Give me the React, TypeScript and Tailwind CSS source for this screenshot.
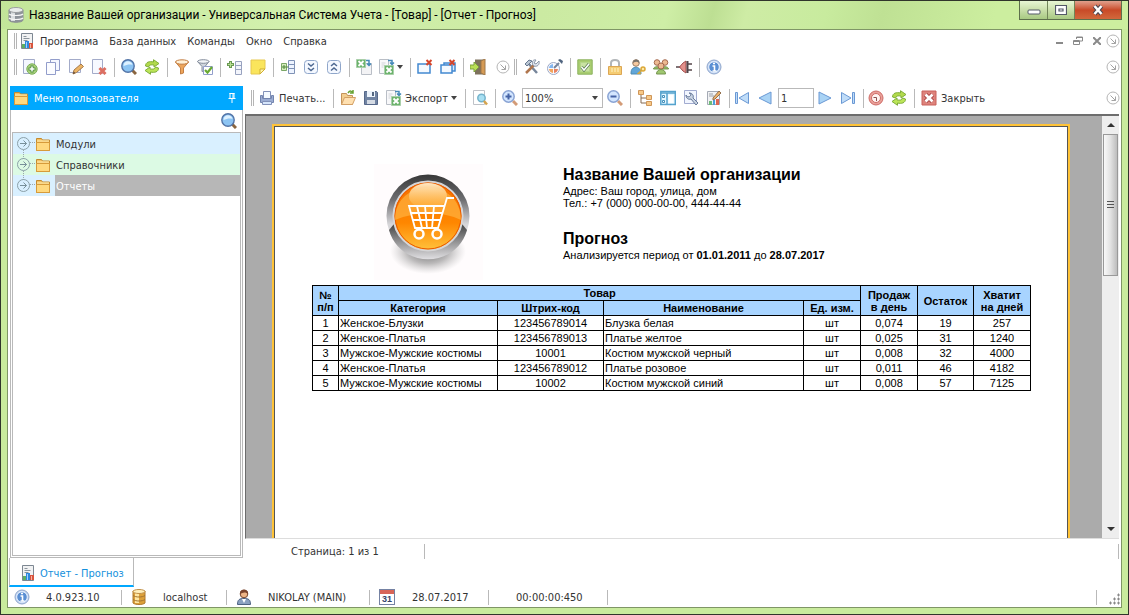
import { useState } from 'react'
import type { ReactNode } from 'react'

// small pieces shared by several icons
const excelX = (
    <>
        <path d="M5.500 6.500h9v9h-9z" fill="#6cb36c" stroke="#a9cfa9" />
        <path d="M7.500 8.500l5 5m0-5l-5 5" stroke="#fff" strokeWidth="1.800" />
    </>
)
const redCross = <path d="M9.500 1l5 5m0-5l-5 5" stroke="#d6452b" strokeWidth="2" />

const icons: Record<string, ReactNode> = {
    report: (
        <>
            <path d="M2.500 .5h11v15h-11z" fill="#f1f2f3" stroke="#7d8792" />
            <path d="M4.500 3.500h3m-3 2h6m-6 2h4" stroke="#8b949c" />
            <path d="M3 11h3v4H3z" fill="#5fae62" />
            <path d="M6 8h4v7H6z" fill="#2d88e0" />
            <path d="M7 9h1v6H7z" fill="#9fd0ff" />
            <path d="M10 10h4v5h-4z" fill="#d9543d" />
            <path d="M11 11h1v4h-1z" fill="#f3b3a3" />
        </>
    ),
    add: (
        <>
            <path d="M1.500 .5h11v14h-11z" fill="#f4f7ff" stroke="#a3abc9" />
            <circle cx="10" cy="10" r="5.200" fill="#a9d27c" stroke="#7cae5c" />
            <path d="M10 6.500v7M6.500 10h7" stroke="#4f8d3f" strokeWidth="3" />
            <path d="M10 7.500v5M7.500 10h5" stroke="#fff" strokeWidth="1.500" />
        </>
    ),
    copy: (
        <>
            <path d="M5.500 .5h9v11h-9z" fill="#f4f7ff" stroke="#929dcb" />
            <path d="M1.500 3.500h9v12h-9z" fill="#fbfcff" stroke="#929dcb" />
        </>
    ),
    edit: (
        <>
            <path d="M1.500 .5h11v13h-11z" fill="#f7f9ff" stroke="#a3abc9" />
            <path d="M5 15l1-4 7-6 2.500 2.500-7 6z" fill="#edb565" stroke="#a57a4c" />
            <path d="M5 15l.7-2.500 1.600 1.600z" fill="#5c4637" />
        </>
    ),
    remove: (
        <>
            <path d="M1.500 .5h10v14h-10z" fill="#f7f9ff" stroke="#a3abc9" />
            <path d="M8.500 9l6 6m0-6l-6 6" stroke="#dc6f62" strokeWidth="3" />
        </>
    ),
    search: (
        <>
            <path d="M11 11l4 4" stroke="#8a653f" strokeWidth="3" />
            <circle cx="7" cy="7" r="6.200" fill="#8cc4f3" stroke="#5273a6" strokeWidth="1.400" />
            <path d="M2.500 7c0-6 8-6 9-1-3-1-6 0-9 1z" fill="#def1ff" />
        </>
    ),
    refresh: (
        <>
            <path d="M1.500 7c0-4 4-5 8-4V.7L15 4.500 10 8V6C7 5.500 5 6 4.500 8z" fill="#b2da4c" stroke="#7fae3a" />
            <path d="M14.500 9c0 4-4 5-8 4v2.300L1 11.500 6 8v2c3 .5 5 0 5.500-2z" fill="#bce558" stroke="#7fae3a" />
        </>
    ),
    filter: (
        <>
            <path d="M1.500 3l5 6v6l3-1V9l5-6z" fill="#eda55b" stroke="#c37e44" />
            <ellipse cx="8" cy="3" rx="6.500" ry="2.200" fill="#fff0d6" stroke="#c37e44" />
        </>
    ),
    filterCheck: (
        <>
            <path d="M.5 2.500l4.500 5v5l3-1v-4l4-5z" fill="#cfd5dd" stroke="#838c9b" />
            <ellipse cx="6.300" cy="2.500" rx="5.700" ry="1.800" fill="#f3f5f8" stroke="#838c9b" />
            <path d="M6.500 7.500h9v8h-9z" fill="#fff" stroke="#929ecb" />
            <path d="M8 11l2.500 2.500L15 8" fill="none" stroke="#69aa31" strokeWidth="2.200" />
        </>
    ),
    addRow: (
        <>
            <path d="M8.500 2.500h6v13h-6zM8.500 6.500h6m-6 4h6" fill="#f3f5fc" stroke="#98a2bf" />
            <path d="M3.500 2v7M0 5.500h7" stroke="#6b9a54" strokeWidth="3" />
            <path d="M3.500 3v5M1 5.500h5" stroke="#b9e095" />
        </>
    ),
    note: (
        <>
            <path d="M1 1h14v9l-5 5H1z" fill="#fae55c" stroke="#e6c84e" />
            <path d="M15 10h-5v5z" fill="#fff6b0" stroke="#d1ae31" />
        </>
    ),
    column: (
        <>
            <path d="M8.500 1.500h6v13h-6zM8.500 5.500h6m-6 4h6" fill="#eef4ff" stroke="#7f92b6" />
            <path d="M1.500 4.500h5v7h-5z" fill="#d4edbd" stroke="#7aa666" />
            <path d="M4 6v4M2 8h4M6.500 8h2" stroke="#4d843b" />
        </>
    ),
    down: (
        <>
            <rect x="1.500" y="1.500" width="13" height="13" rx="3" fill="#f4f8ff" stroke="#8fa6ca" />
            <path d="M5 4.500l3 2.500 3-2.500M5 9l3 2.500L11 9" fill="none" stroke="#4d6891" strokeWidth="1.500" />
        </>
    ),
    up: (
        <>
            <rect x="1.500" y="1.500" width="13" height="13" rx="3" fill="#f4f8ff" stroke="#8fa6ca" />
            <path d="M5 7l3-2.500L11 7m-6 4.500L8 9l3 2.500" fill="none" stroke="#4d6891" strokeWidth="1.500" />
        </>
    ),
    import: (
        <>
            <path d="M5.500 4.500h10v11h-10z" fill="#f3f3f5" stroke="#b9bec6" />
            <path d="M.5 .5h9v8h-9z" fill="#6cb36c" stroke="#a9cfa9" />
            <path d="M2.500 2l5 5m0-5l-5 5" stroke="#fff" strokeWidth="1.800" />
            <path d="M10 1.500h3v4m-2-1l2 2 2-2" fill="none" stroke="#4589b9" strokeWidth="1.500" />
        </>
    ),
    export: (
        <>
            <path d="M.5 .5h9v14h-9z" fill="#f8f8fa" stroke="#b9bec6" />
            <path d="M2.500 4h4m-4 2h3m-3 2h2" stroke="#d0d3d8" />
            {excelX}
            <path d="M9 1.500h4v3m-2-1l2 2 2-2" fill="none" stroke="#4589b9" strokeWidth="1.500" />
        </>
    ),
    closeOne: (
        <>
            <path d="M1 5h12v9H1z" fill="#f4f9ff" stroke="#4389d1" strokeWidth="1.500" />
            {redCross}
        </>
    ),
    closeAll: (
        <>
            <path d="M4 4h11v8H4z" fill="#dcecfc" stroke="#4389d1" strokeWidth="1.500" />
            <path d="M1 6h11v8H1z" fill="#f4f9ff" stroke="#4389d1" strokeWidth="1.500" />
            {redCross}
        </>
    ),
    exit: (
        <>
            <path d="M5 .5h10v15H5z" fill="#7d715d" />
            <path d="M11 2l4-2v16l-4-2z" fill="#d69b55" stroke="#a0784a" />
            <path d="M0 6h4V3l5 5-5 5v-3H0z" fill="#b9de55" stroke="#7da03f" />
        </>
    ),
    more: (
        <>
            <circle cx="8" cy="8" r="6" fill="#fff" stroke="#b5b5b5" />
            <path d="M5.500 5.500l5 5m0-4v4h-4" fill="none" stroke="#a3a3a3" />
        </>
    ),
    tools: (
        <>
            <path d="M4 4l9 10" stroke="#77869b" strokeWidth="2.500" />
            <path d="M1 5l4-4 3 1-5 5z" fill="#b9c5d3" stroke="#67788f" />
            <path d="M2 14l8-8" stroke="#b0764e" strokeWidth="2.500" />
            <path d="M15 2l-3 3-2-1 2-3c-4-1-5 4-2 6 3 1 6-1 5-5z" fill="#e0e5ed" stroke="#8b97a9" />
        </>
    ),
    palette: (
        <>
            <circle cx="6.500" cy="9.500" r="6" fill="#f9f9ff" stroke="#9ba8c4" />
            <path d="M6 5a4.500 4.500 0 0 0-4 4h4z" fill="#83b6ef" />
            <path d="M6 14a4.500 4.500 0 0 1-4-4h4z" fill="#f2a55d" />
            <path d="M7 14a4.500 4.500 0 0 0 4-4H7z" fill="#e88261" />
            <path d="M7 9l5-5" stroke="#73849c" strokeWidth="2" />
            <path d="M11 1l4 4 1-3-3-2z" fill="#50647f" />
        </>
    ),
    check: (
        <>
            <path d="M.8 .8h14.400v14.400H.8z" fill="#a9cd70" stroke="#8cb35f" />
            <path d="M3.500 3.500h9v9h-9z" fill="#c9e2a2" stroke="#b5d68a" />
            <path d="M4.500 8l2.500 3 5-6" fill="none" stroke="#587b50" strokeWidth="3" />
            <path d="M4.500 8l2.500 3 5-6" fill="none" stroke="#fff" strokeWidth="1.500" />
        </>
    ),
    lock: (
        <>
            <path d="M4 7V4c0-4 8-4 8 0v3" fill="none" stroke="#b1b5b8" strokeWidth="2" />
            <path d="M1.500 7.500h13v8h-13z" fill="#f5cc72" stroke="#dca654" />
            <path d="M4 10h8m-8 2h8" stroke="#fff4c6" strokeDasharray="2 1" />
        </>
    ),
    userKey: (
        <>
            <path d="M1 15c0-6 2-6 5-7 4 1 5 3 5 7z" fill="#62a6d8" stroke="#4f8cb3" />
            <circle cx="6" cy="4" r="3.300" fill="#f6c99f" stroke="#9b7f68" />
            <path d="M3 4c0-5 7-4 6 0-2-2-4-1-6 0z" fill="#77716b" />
            <circle cx="13" cy="10" r="2" fill="#ffe8a3" stroke="#dba737" strokeWidth="1.500" />
            <path d="M11.500 11.500L7.500 15m2-1l1 1" stroke="#dba737" strokeWidth="1.500" />
        </>
    ),
    users: (
        <>
            <path d="M.5 10c0-3 7-3 7 0zM8.500 10c0-3 7-3 7 0z" fill="#96bd64" stroke="#75944f" />
            <circle cx="4" cy="3.500" r="2.800" fill="#edb991" stroke="#a5694f" />
            <circle cx="12" cy="3.500" r="2.800" fill="#edb991" stroke="#a5694f" />
            <circle cx="8" cy="7" r="3" fill="#edb991" stroke="#a5694f" />
            <path d="M3.500 15c0-6 9-6 9 0z" fill="#9fc770" stroke="#75944f" />
        </>
    ),
    plug: (
        <>
            <path d="M0 8h5M11 5h5m-5 6h5" stroke="#55464a" strokeWidth="1.500" />
            <path d="M10 2v12L7 12 3.500 8 7 4z" fill="#e3908b" stroke="#a24f4d" />
            <path d="M11.500 2v12" stroke="#514448" strokeWidth="2" />
        </>
    ),
    info: (
        <>
            <circle cx="8" cy="8" r="7" fill="#c3d6f1" stroke="#8fa6cc" />
            <circle cx="8" cy="8" r="5.300" fill="#5a8fd3" stroke="#e9f2ff" />
            <path d="M6.500 7h2v5M6.500 12h4M7 4.500h2" fill="none" stroke="#fff" strokeWidth="1.600" />
        </>
    ),
    print: (
        <>
            <path d="M4.500 1.500h7v7h-7z" fill="#f5fbff" stroke="#8291b8" />
            <path d="M1.500 5.500h2v3h9v-3h2v7h-13z" fill="#9badd3" stroke="#7284ae" />
            <path d="M3.500 11.500h9v3h-9z" fill="#d5e5fb" stroke="#8291b8" />
        </>
    ),
    open: (
        <>
            <path d="M1.500 14.500v-11h5l1 2h5v9z" fill="#f3cf90" stroke="#c4935a" />
            <path d="M1.500 14.500l3-7h11l-3 7z" fill="#ffe0b0" stroke="#d3a066" />
            <path d="M8 3c2-3 4-2 5 0m0-3v3h-3" fill="none" stroke="#67a333" strokeWidth="1.500" />
        </>
    ),
    save: (
        <>
            <path d="M1.500 1.500h12l1 1v12h-13z" fill="#7184a3" stroke="#56688a" />
            <path d="M4 1h8v6H4z" fill="#edf4fc" />
            <path d="M9 2h2v4H9z" fill="#546781" />
            <path d="M4 10h8v4H4z" fill="#d5dbe4" />
        </>
    ),
    preview: (
        <>
            <path d="M1.500 .5h11v14h-11z" fill="#fff" stroke="#bfc2c8" />
            <circle cx="9.500" cy="8" r="3.700" fill="#a8dff2" stroke="#74b3cc" strokeWidth="1.500" />
            <path d="M12 11l3 3.500" stroke="#d5a34d" strokeWidth="2.500" />
        </>
    ),
    zoomIn: (
        <>
            <path d="M11 11l4 4" stroke="#d39b77" strokeWidth="3" />
            <circle cx="6.500" cy="6.500" r="5.700" fill="#d3e6ff" stroke="#8aa4d4" strokeWidth="1.500" />
            <path d="M3.500 6.500h6m-3-3v6" stroke="#4563a6" strokeWidth="2" />
        </>
    ),
    zoomOut: (
        <>
            <path d="M11 11l4 4" stroke="#d39b77" strokeWidth="3" />
            <circle cx="6.500" cy="6.500" r="5.700" fill="#d3e6ff" stroke="#8aa4d4" strokeWidth="1.500" />
            <path d="M3.500 6.500h6" stroke="#4563a6" strokeWidth="2" />
        </>
    ),
    tree: (
        <>
            <path d="M4 4v9h6M4 8h6" fill="none" stroke="#856b53" />
            <path d="M1.500 .5h5v4h-5zM9.500 5.500h5v4h-5zM9.500 11.500h5v4h-5z" fill="#f7c989" stroke="#cf9658" />
        </>
    ),
    thumbs: (
        <>
            <path d="M.8 1.500h14.500v13H.8z" fill="#e5f7ff" stroke="#55a2cd" strokeWidth="1.500" />
            <path d="M1 3h14M7 3v11" stroke="#55a2cd" strokeWidth="1.500" />
            <path d="M2.500 5.500h2v2h-2zM2.500 10.500h2v2h-2z" fill="#fff" stroke="#438fba" />
            <path d="M8.500 5h5v8h-5z" fill="#fff" />
        </>
    ),
    wrench: (
        <>
            <path d="M1.500 .5h12v13h-12z" fill="#f2f6ff" stroke="#a1abd0" />
            <path d="M8 4c0 3-4 4-5 1 0 3 2 5 5 4l5 6 2-2-5-5c1-3-1-5-4-5z" fill="#c8d3e2" stroke="#697b9b" />
        </>
    ),
    chartEdit: (
        <>
            <path d="M1.500 1.500h12v13h-12z" fill="#f1f2f4" stroke="#a5aab5" />
            <path d="M3 4h4M3 6h5" stroke="#999fa8" />
            <path d="M3 11h3v4H3z" fill="#6dbb79" />
            <path d="M7 10h2v5H7z" fill="#4b9fdd" />
            <path d="M10 9h3v6h-3z" fill="#df6551" />
            <path d="M7 8l6-7 2 2-6 6-2 1z" fill="#ecb36b" stroke="#94704e" />
        </>
    ),
    first: <path d="M1.500 2.500h2v11h-2zM14.500 2.500v11L5 8z" fill="#bfdcf8" stroke="#6a98d4" />,
    prev: <path d="M14 2v12L2 8z" fill="#a9d3f5" stroke="#6a98d4" />,
    next: <path d="M2 2v12l12-6z" fill="#a9d3f5" stroke="#6a98d4" />,
    last: <path d="M12.500 2.500h2v11h-2zM1.500 2.500v11L11 8z" fill="#bfdcf8" stroke="#6a98d4" />,
    stop: (
        <>
            <circle cx="8" cy="8" r="7" fill="#e9a19a" stroke="#cf6b66" />
            <circle cx="8" cy="8" r="4.500" fill="#fff5f2" stroke="#cf6b66" />
            <path d="M5.500 7.500h3V11" fill="none" stroke="#8d5150" />
        </>
    ),
    closeReport: (
        <>
            <path d="M1 1h14v14H1z" fill="#dd837c" stroke="#c9605b" />
            <path d="M4.500 4.500l7 7m0-7l-7 7" stroke="#a43b3b" strokeWidth="4.500" />
            <path d="M4.500 4.500l7 7m0-7l-7 7" stroke="#fff" strokeWidth="2.800" />
        </>
    ),
    folder: (
        <>
            <path d="M1.500 14.500v-12h5l1 1.500h7v10.500z" fill="#f3c062" stroke="#c48a2e" />
            <path d="M1.500 6.500h13v8h-13z" fill="#ffd97f" stroke="#d79b3a" />
            <path d="M2 5h12" stroke="#fff0b5" />
        </>
    ),
    pin: <path d="M5.500 3.500h5M6 3v6m3-6v6m1-6v6M4.500 8.500h7M8 9v4" stroke="#fff" fill="none" />,
    server: (
        <>
            <path d="M1 3v10c0 3 14 3 14 0V3z" fill="#8e949a" stroke="#8b9094" />
            <path d="M3 4v10h4V4z" fill="#d9dddf" />
            <ellipse cx="8" cy="3" rx="7" ry="2.500" fill="#e9ecec" stroke="#9b9ea0" />
            <path d="M1 7c2 2 12 2 14 0M1 11c2 2 12 2 14 0" fill="none" stroke="#f5f5f5" strokeWidth="1.200" />
        </>
    ),
    database: (
        <>
            <path d="M2 2v12c2 2 10 2 12 0V2z" fill="#dda039" stroke="#b07a2f" />
            <path d="M4 4v10h4V4z" fill="#ffe6a1" />
            <ellipse cx="8" cy="2.500" rx="6" ry="2" fill="#fff0bc" stroke="#c08f48" />
            <path d="M2 6.500c3 2 9 2 12 0m-12 4c3 2 9 2 12 0" fill="none" stroke="#a37430" />
        </>
    ),
    person: (
        <>
            <path d="M1.500 15.500c0-5 2-6 6.500-6s6.500 1 6.500 6z" fill="#8ba1c0" stroke="#4d6282" />
            <path d="M6 10l2 4 2-4z" fill="#fff" />
            <circle cx="8" cy="5" r="3.800" fill="#eeb586" stroke="#73442c" />
            <path d="M4 5c-1-6 9-6 8 0-2-2-5-2-8 0z" fill="#7c452d" />
        </>
    ),
}

const Icon = ({ name, className = 'h-4 w-4' }: { name: string; className?: string }) => (
    <svg viewBox="0 0 16 16" fill="none" aria-hidden="true" className={`${className} shrink-0`}>
        {icons[name]}
    </svg>
)

const Calendar = () => (
    <div className="h-4 w-4 shrink-0 border border-[#7582a3] bg-white text-center font-['Liberation_Sans',sans-serif] text-[9px] leading-[10px] font-bold text-[#374366]">
        <div className="h-1 bg-[#d86558]" />
        31
    </div>
)

// tree node marker with the dotted guide lines above and below it
const Expander = ({ first, last }: { first: boolean; last: boolean }) => (
    <svg viewBox="0 0 20 21" fill="none" className="h-[21px] w-5" aria-hidden="true">
        {!first && <path d="M8.500 0v5" stroke="#9aa7ad" strokeDasharray="1 1" />}
        {!last && <path d="M8.500 17v4" stroke="#9aa7ad" strokeDasharray="1 1" />}
        <path d="M15 9.500h5" stroke="#9aa7ad" strokeDasharray="1 1" />
        <circle cx="8.500" cy="10.500" r="6" stroke="#8ba0a8" />
        <path d="M5 10.500h6.500M8.500 7.500l3 3-3 3" stroke="#78909a" />
    </svg>
)

const ToolSeparator = () => <div className="-mr-px h-[19px] w-px shrink-0 bg-[#b9b9b9]" />
const StatusSeparator = () => <div className="h-[15px] w-px shrink-0 bg-[#b9b9b9]" />
const Grip = () => <div className="h-4 w-[3px] shrink-0 border-x border-[#b5b5b5]" />
const Arrow = () => (
    <svg viewBox="0 0 6 4" className="h-1 w-[6px] shrink-0" aria-hidden="true">
        <path d="M0 0h6L3 4z" fill="#444" />
    </svg>
)

const Tool = ({ name, label }: { name: string; label: string }) => (
    <button title={label} aria-label={label} className="shrink-0">
        <Icon name={name} />
    </button>
)

const mainTools = [
    ['add', 'Добавить'], ['copy', 'Копировать'], ['edit', 'Изменить'], ['remove', 'Удалить'], ['|'],
    ['search', 'Поиск'], ['refresh', 'Обновить'], ['|'],
    ['filter', 'Фильтр'], ['filterCheck', 'Настройка фильтра'], ['|'],
    ['addRow', 'Добавить строку'], ['note', 'Заметка'], ['|'],
    ['column', 'Столбцы'], ['down', 'Развернуть'], ['up', 'Свернуть'], ['|'],
    ['import', 'Импорт'], ['export', 'Экспорт'], ['v'], ['|'],
    ['closeOne', 'Закрыть окно'], ['closeAll', 'Закрыть все окна'], ['|'],
    ['exit', 'Выход'], ['gap'], ['more', 'Ещё'], ['||'],
    ['tools', 'Настройки'], ['palette', 'Оформление'], ['|'],
    ['check', 'Задачи'], ['|'],
    ['lock', 'Блокировка'], ['userKey', 'Права'], ['users', 'Пользователи'], ['plug', 'Соединение'], ['|'],
    ['info', 'О программе'],
]

const rows = [
    ['Женское-Блузки', '123456789014', 'Блузка белая', '0,074', '19', '257'],
    ['Женское-Платья', '123456789013', 'Платье желтое', '0,025', '31', '1240'],
    ['Мужское-Мужские костюмы', '10001', 'Костюм мужской черный', '0,008', '32', '4000'],
    ['Женское-Платья', '123456789012', 'Платье розовое', '0,011', '46', '4182'],
    ['Мужское-Мужские костюмы', '10002', 'Костюм мужской синий', '0,008', '57', '7125'],
]

const TitleBar = () => (
    <header className="flex h-7 shrink-0 items-start bg-[linear-gradient(105deg,#c2e599_0%,#d2f0ad_25%,#cbeaa2_48%,#ceeea6_59%,#bddf93_63%,#ceeca5_66%,#c8eb9e_73%,#bfe194_78%,#ccee9f_88%)] pr-[6px] pl-[7px]">
        <div className="flex h-7 min-w-0 flex-1 items-center gap-[5px]">
            <Icon name="server" />
            <h1 className="font-['Roboto',sans-serif] text-[12px] whitespace-nowrap text-black">
                Название Вашей организации - Универсальная Система Учета - [Товар] - [Отчет - Прогноз]
            </h1>
        </div>
        <div className="flex h-[19px] shrink-0 border border-t-0 border-[#5d704b]">
            <button aria-label="Свернуть" className="flex w-7 items-center justify-center border-r border-[#718558] bg-linear-to-b from-[#e8f6d3] via-[#c9dfaa] to-[#a8c982]">
                <svg viewBox="0 0 14 8" className="mt-1 h-2 w-[14px]"><rect x="1" y="2" width="12" height="4" rx="1" fill="#fff" stroke="#535866" /></svg>
            </button>
            <button aria-label="Развернуть" className="flex w-[27px] items-center justify-center border-r border-[#718558] bg-linear-to-b from-[#e8f6d3] via-[#c9dfaa] to-[#a8c982]">
                <svg viewBox="0 0 12 11" className="h-[11px] w-3"><path d="M.5 .5h11v9H.5zM4 4h4v2H4z" fill="#fff" stroke="#535866" strokeWidth="1.200" /></svg>
            </button>
            <button aria-label="Закрыть" className="flex w-[46px] items-center justify-center bg-linear-to-b from-[#e0a08c] via-[#c84a27] to-[#d2683c]">
                <svg viewBox="0 0 14 12" className="h-3 w-[14px]"><path d="M3.500 2l7 8m0-8l-7 8" stroke="#4b4650" strokeWidth="4.500" /><path d="M3.500 2l7 8m0-8l-7 8" stroke="#fff" strokeWidth="2.500" /></svg>
            </button>
        </div>
    </header>
)

const MenuBar = () => (
    <nav className="flex h-[22px] shrink-0 items-center pl-[6px]">
        <Grip />
        <Icon name="report" className="mr-[5px] ml-[2px] h-4 w-4" />
        <div className="flex flex-1 gap-[11px] pt-px">
            {['Программа', 'База данных', 'Команды', 'Окно', 'Справка'].map((item) => (
                <button key={item}>{item}</button>
            ))}
        </div>
        <button aria-label="Свернуть документ" className="mr-[9px]"><svg viewBox="0 0 8 10" className="h-[10px] w-2"><path d="M0 7h7" stroke="#8a8a8a" strokeWidth="2" /></svg></button>
        <button aria-label="Восстановить документ" className="mr-[9px]"><svg viewBox="0 0 11 10" className="h-[10px] w-[11px]"><path d="M3.500 3V1h6v4H7M.5 4.500h6v4h-6zM.5 5.500h6M3 1.500h7" fill="none" stroke="#8a8a8a" /></svg></button>
        <button aria-label="Закрыть документ" className="mr-1"><svg viewBox="0 0 8 8" className="h-2 w-2"><path d="M0 0l8 8m0-8L0 8" stroke="#8a8a8a" strokeWidth="2" /></svg></button>
        <Tool name="more" label="Параметры меню" />
    </nav>
)

const MainToolbar = () => (
    <div role="toolbar" className="flex h-[30px] shrink-0 items-center justify-between pl-[6px]">
        <div className="flex items-center gap-[7px]">
            <div className="-mr-[2px]"><Grip /></div>
            {mainTools.map(([name, label], i) => {
                if (name === '|') return <ToolSeparator key={i} />
                if (name === '||') return <div key={i} className="-ml-1"><Grip /></div>
                if (name === 'v') return <div key={i} className="-ml-[5px]"><Arrow /></div>
                if (name === 'gap') return <div key={i} className="-mx-[3px] w-px" />
                return <Tool key={i} name={name} label={label} />
            })}
        </div>
        <Tool name="more" label="Параметры панели" />
    </div>
)

const UserMenu = () => {
    const [selected, setSelected] = useState('Отчеты')
    const items = ['Модули', 'Справочники', 'Отчеты']
    return (
        <aside className="mt-1 flex w-[233px] shrink-0 flex-col border border-t-0 border-[#b9b9b9]">
            <div className="-mx-px flex h-6 shrink-0 items-center bg-[#00a8ff] pr-[3px] pl-[3px] text-white">
                <Icon name="folder" />
                <h2 className="ml-[5px] flex-1 pt-px">Меню пользователя</h2>
                <Tool name="pin" label="Закрепить" />
            </div>
            <div className="flex h-[22px] shrink-0 items-center pr-[5px]">
                <input aria-label="Поиск по меню" className="h-full min-w-0 flex-1 outline-none" />
                <Tool name="search" label="Найти" />
            </div>
            <ul className="mx-px mb-px flex-1 border border-[#b9b9b9]">
                {items.map((item, i) => (
                    <li key={item} className={`flex h-[21px] items-center ${i === 1 ? 'bg-[#dcfae4]' : 'bg-[#d9f0ff]'}`}>
                        <button aria-label={`Раскрыть ${item}`} className="ml-[2px]">
                            <Expander first={i === 0} last={i === items.length - 1} />
                        </button>
                        <Icon name="folder" />
                        <button
                            onClick={() => setSelected(item)}
                            className={`ml-1 h-full flex-1 pt-px pl-px text-left ${selected === item ? 'bg-[#b7b7b7] text-white' : ''}`}
                        >
                            {item}
                        </button>
                    </li>
                ))}
            </ul>
        </aside>
    )
}

const ReportToolbar = () => (
    <div role="toolbar" className="flex h-8 shrink-0 items-center justify-between pl-[6px]">
        <div className="flex items-center gap-[7px]">
            <div className="-mr-[2px]"><Grip /></div>
            <button className="flex w-[67px] items-center gap-1 whitespace-nowrap"><Icon name="print" /><span className="pt-px">Печать...</span></button>
            <ToolSeparator />
            <Tool name="open" label="Открыть" />
            <Tool name="save" label="Сохранить" />
            <button className="flex w-[72px] items-center gap-[3px] whitespace-nowrap">
                <Icon name="export" /><span className="pt-px">Экспорт</span><Arrow />
            </button>
            <ToolSeparator />
            <Tool name="preview" label="Просмотр" />
            <ToolSeparator />
            <Tool name="zoomIn" label="Увеличить" />
            <div className="relative -mx-[3px]">
                <select aria-label="Масштаб" defaultValue="100%" className="h-5 w-[81px] appearance-none border border-[#b9b9b9] bg-white pl-[2px] outline-none">
                    <option>50%</option>
                    <option>100%</option>
                    <option>200%</option>
                </select>
                <span className="pointer-events-none absolute top-2 right-[5px] flex"><Arrow /></span>
            </div>
            <Tool name="zoomOut" label="Уменьшить" />
            <ToolSeparator />
            <Tool name="tree" label="Структура" />
            <Tool name="thumbs" label="Миниатюры" />
            <Tool name="wrench" label="Параметры страницы" />
            <Tool name="chartEdit" label="Редактировать отчет" />
            <div className="-mr-[2px]"><ToolSeparator /></div>
            <Tool name="first" label="Первая страница" />
            <Tool name="prev" label="Предыдущая страница" />
            <input aria-label="Номер страницы" defaultValue="1" className="-mr-1 -ml-[2px] h-5 w-9 border border-[#b9b9b9] pl-[2px] outline-none" />
            <Tool name="next" label="Следующая страница" />
            <Tool name="last" label="Последняя страница" />
            <div className="-mr-[2px]"><ToolSeparator /></div>
            <Tool name="stop" label="Остановить" />
            <Tool name="refresh" label="Обновить отчет" />
            <ToolSeparator />
            <button className="flex items-center gap-1"><Icon name="closeReport" /><span className="pt-px">Закрыть</span></button>
        </div>
        <Tool name="more" label="Параметры отчета" />
    </div>
)

const CartLogo = () => (
    <svg viewBox="0 0 109 116" className="h-[116px] w-[109px] bg-[#fffcfd]" role="img" aria-label="Логотип">
        <defs>
            <linearGradient id="rim" x2="0" y2="1"><stop stopColor="#383838" /><stop offset=".3" stopColor="#6d6d70" /><stop offset=".6" stopColor="#d7d6d9" /></linearGradient>
            <linearGradient id="lower" x2="0" y2="1"><stop stopColor="#444" /><stop offset="1" stopColor="#e0dfe2" /></linearGradient>
            <linearGradient id="orange" x2="0" y2="1"><stop stopColor="#f56f00" /><stop offset=".6" stopColor="#ff8700" /><stop offset="1" stopColor="#ffc33d" /></linearGradient>
            <linearGradient id="gloss" x2="0" y2="1"><stop stopColor="#ffe9c5" /><stop offset="1" stopColor="#ffab2d" stopOpacity=".6" /></linearGradient>
            <radialGradient id="shadow"><stop stopColor="#555" stopOpacity=".9" /><stop offset=".55" stopColor="#777" stopOpacity=".5" /><stop offset="1" stopColor="#aaa" stopOpacity="0" /></radialGradient>
        </defs>
        <ellipse cx="54" cy="87" rx="38" ry="23" fill="url(#shadow)" />
        <circle cx="54" cy="52" r="41.500" fill="url(#rim)" />
        <path d="M15 66l5-6h68l5 6C82 105 26 105 15 66z" fill="url(#lower)" />
        <circle cx="54" cy="52" r="34.500" fill="url(#orange)" stroke="#d5d5d7" strokeWidth="2" />
        <circle cx="54" cy="52" r="33" stroke="#e95800" fill="none" />
        <path d="M21 56c0-43 66-43 66 0-18-9-45-9-66 0z" fill="#ffb23e" opacity=".7" />
        <ellipse cx="54" cy="32" rx="19" ry="13" fill="url(#gloss)" />
        <path d="M80 34h-7l-9 30H41l-6-22h35M37 49h31M39 56h27M43 42l5 22M51 42l2 22M60 42l-2 22" fill="none" stroke="#fff" strokeWidth="1.800" />
        <circle cx="45" cy="70" r="4.500" fill="#ff9b19" stroke="#fff" strokeWidth="2.500" />
        <circle cx="63" cy="70" r="4.500" fill="#ff9b19" stroke="#fff" strokeWidth="2.500" />
    </svg>
)

const ReportTable = () => (
    <table className="w-[719px] table-fixed border-collapse text-center leading-[12px] [&_td]:h-[15px] [&_td]:border [&_td]:border-black [&_td]:p-0 [&_th]:h-[15px] [&_th]:border [&_th]:border-black [&_th]:p-0">
        <colgroup>
            <col className="w-[26px]" />
            <col className="w-[159px]" />
            <col className="w-[106px]" />
            <col className="w-[200px]" />
            <col className="w-[57px]" />
            <col className="w-[57px]" />
            <col className="w-[56px]" />
            <col className="w-[57px]" />
        </colgroup>
        <thead className="bg-[#a8d4ff]">
            <tr>
                <th rowSpan={2}>№<br />п/п</th>
                <th colSpan={4}>Товар</th>
                <th rowSpan={2}>Продаж<br />в день</th>
                <th rowSpan={2}>Остаток</th>
                <th rowSpan={2}>Хватит<br />на дней</th>
            </tr>
            <tr>
                <th>Категория</th>
                <th>Штрих-код</th>
                <th>Наименование</th>
                <th>Ед. изм.</th>
            </tr>
        </thead>
        <tbody>
            {rows.map(([category, code, name, sales, rest, days], i) => (
                <tr key={code}>
                    <td>{i + 1}</td>
                    <td className="text-left"><span className="pl-px">{category}</span></td>
                    <td>{code}</td>
                    <td className="text-left"><span className="pl-px">{name}</span></td>
                    <td>шт</td>
                    <td>{sales}</td>
                    <td>{rest}</td>
                    <td>{days}</td>
                </tr>
            ))}
        </tbody>
    </table>
)

const ReportPage = () => (
    <article className="mt-2 ml-[26px] h-[1128px] w-[798px] shrink-0 border-2 border-[#ffc338] bg-white font-['Liberation_Sans',Arial,sans-serif] text-[11px] leading-[12px] text-black">
        <div className="h-full border border-[#555] px-[37px] pt-[37px]">
            <div className="mb-[5px] ml-[62px] flex gap-20">
                <CartLogo />
                <div>
                    <h2 className="text-[16px] leading-[21px] font-bold">Название Вашей организации</h2>
                    <p>Адрес: Ваш город, улица, дом</p>
                    <p>Тел.: +7 (000) 000-00-00, 444-44-44</p>
                    <h3 className="mt-[19px] text-[16px] leading-[21px] font-bold">Прогноз</h3>
                    <p>Анализируется период от <b>01.01.2011</b> до <b>28.07.2017</b></p>
                </div>
            </div>
            <ReportTable />
        </div>
    </article>
)

const ScrollBar = () => (
    <div aria-hidden="true" className="flex w-[17px] shrink-0 flex-col items-center justify-between bg-[#eeeeee]">
        <div className="flex flex-col items-center">
            <div className="flex h-[18px] items-center"><svg viewBox="0 0 8 4" className="h-1 w-2"><path d="M0 4h8L4 0z" fill="#333" /></svg></div>
            <div className="flex h-[142px] w-[15px] items-center justify-center border border-[#999] bg-linear-to-r from-[#f8f8f8] via-[#e2e2e2] to-[#bdbdbd]">
                <svg viewBox="0 0 7 8" className="h-2 w-[7px]"><path d="M0 .5h7M0 3.500h7M0 6.500h7" stroke="#555" /></svg>
            </div>
        </div>
        <div className="flex h-[18px] items-center"><svg viewBox="0 0 8 4" className="h-1 w-2"><path d="M0 0h8L4 4z" fill="#333" /></svg></div>
    </div>
)

const StatusBar = () => (
    <footer className="flex h-5 shrink-0 items-center pl-[6px]">
        <Icon name="info" />
        <span className="ml-4 w-[75px] pt-px">4.0.923.10</span>
        <StatusSeparator />
        <div className="ml-[9px] flex w-[95px] items-center gap-4"><Icon name="database" /><span className="pt-px">localhost</span></div>
        <StatusSeparator />
        <div className="ml-[9px] flex w-[133px] items-center gap-4 whitespace-nowrap"><Icon name="person" /><span className="pt-px">NIKOLAY (MAIN)</span></div>
        <StatusSeparator />
        <div className="ml-[9px] flex w-[109px] items-center gap-[17px]"><Calendar /><span className="pt-px">28.07.2017</span></div>
        <StatusSeparator />
        <span className="ml-[27px] w-[91px] pt-px">00:00:00:450</span>
        <StatusSeparator />
        <div className="flex-1" />
        <StatusSeparator />
        <svg viewBox="0 0 12 12" className="mt-1 mr-px ml-[11px] h-3 w-3" aria-hidden="true">
            <path d="M9 2h3M5 6h3m1 0h3M1 10h3m1 0h3m1 0h3M10.500 .5v3m0 1v3m0 1v3m-4-7v3m0 1v3m-4-3v3" stroke="#888" />
        </svg>
    </footer>
)

export default function App() {
    return (
        <div className="flex h-screen min-h-[480px] flex-col overflow-hidden border border-[#30352b] bg-[#c9eb9d] font-['DejaVu_Sans_Condensed','Noto_Sans',sans-serif] text-[11px] leading-[15px] text-[#333]">
            <TitleBar />
            <div className="mx-[6px] mb-[6px] flex min-h-0 flex-1 flex-col border border-[#7f9666] bg-white">
                <MenuBar />
                <MainToolbar />
                <main className="flex min-h-0 flex-1 gap-[2px] pl-[2px]">
                    <UserMenu />
                    <section className="flex min-w-0 flex-1 flex-col">
                        <ReportToolbar />
                        <div className="mr-[2px] flex min-h-0 flex-1 border-t-2 border-b border-l border-t-[#6d6d6d] border-b-[#ddd] border-l-[#6d6d6d] bg-[#ababab]">
                            <div className="min-w-0 flex-1 overflow-hidden"><ReportPage /></div>
                            <ScrollBar />
                        </div>
                        <div className="flex h-[19px] shrink-0 items-center pt-[6px] pr-[2px]">
                            <span className="ml-[46px] w-[133px]">Страница: 1 из 1</span>
                            <div className="flex flex-1 justify-between"><StatusSeparator /><StatusSeparator /></div>
                        </div>
                    </section>
                </main>
                <div className="flex h-[29px] shrink-0 pl-px">
                    <button className="flex w-[125px] items-center gap-[4px] border-x border-b-2 border-x-[#b9b9b9] border-b-[#00a8ff] pt-[3px] pl-[10px] whitespace-nowrap text-[#1490dc]">
                        <Icon name="report" />Отчет - Прогноз
                    </button>
                </div>
                <StatusBar />
            </div>
        </div>
    )
}
